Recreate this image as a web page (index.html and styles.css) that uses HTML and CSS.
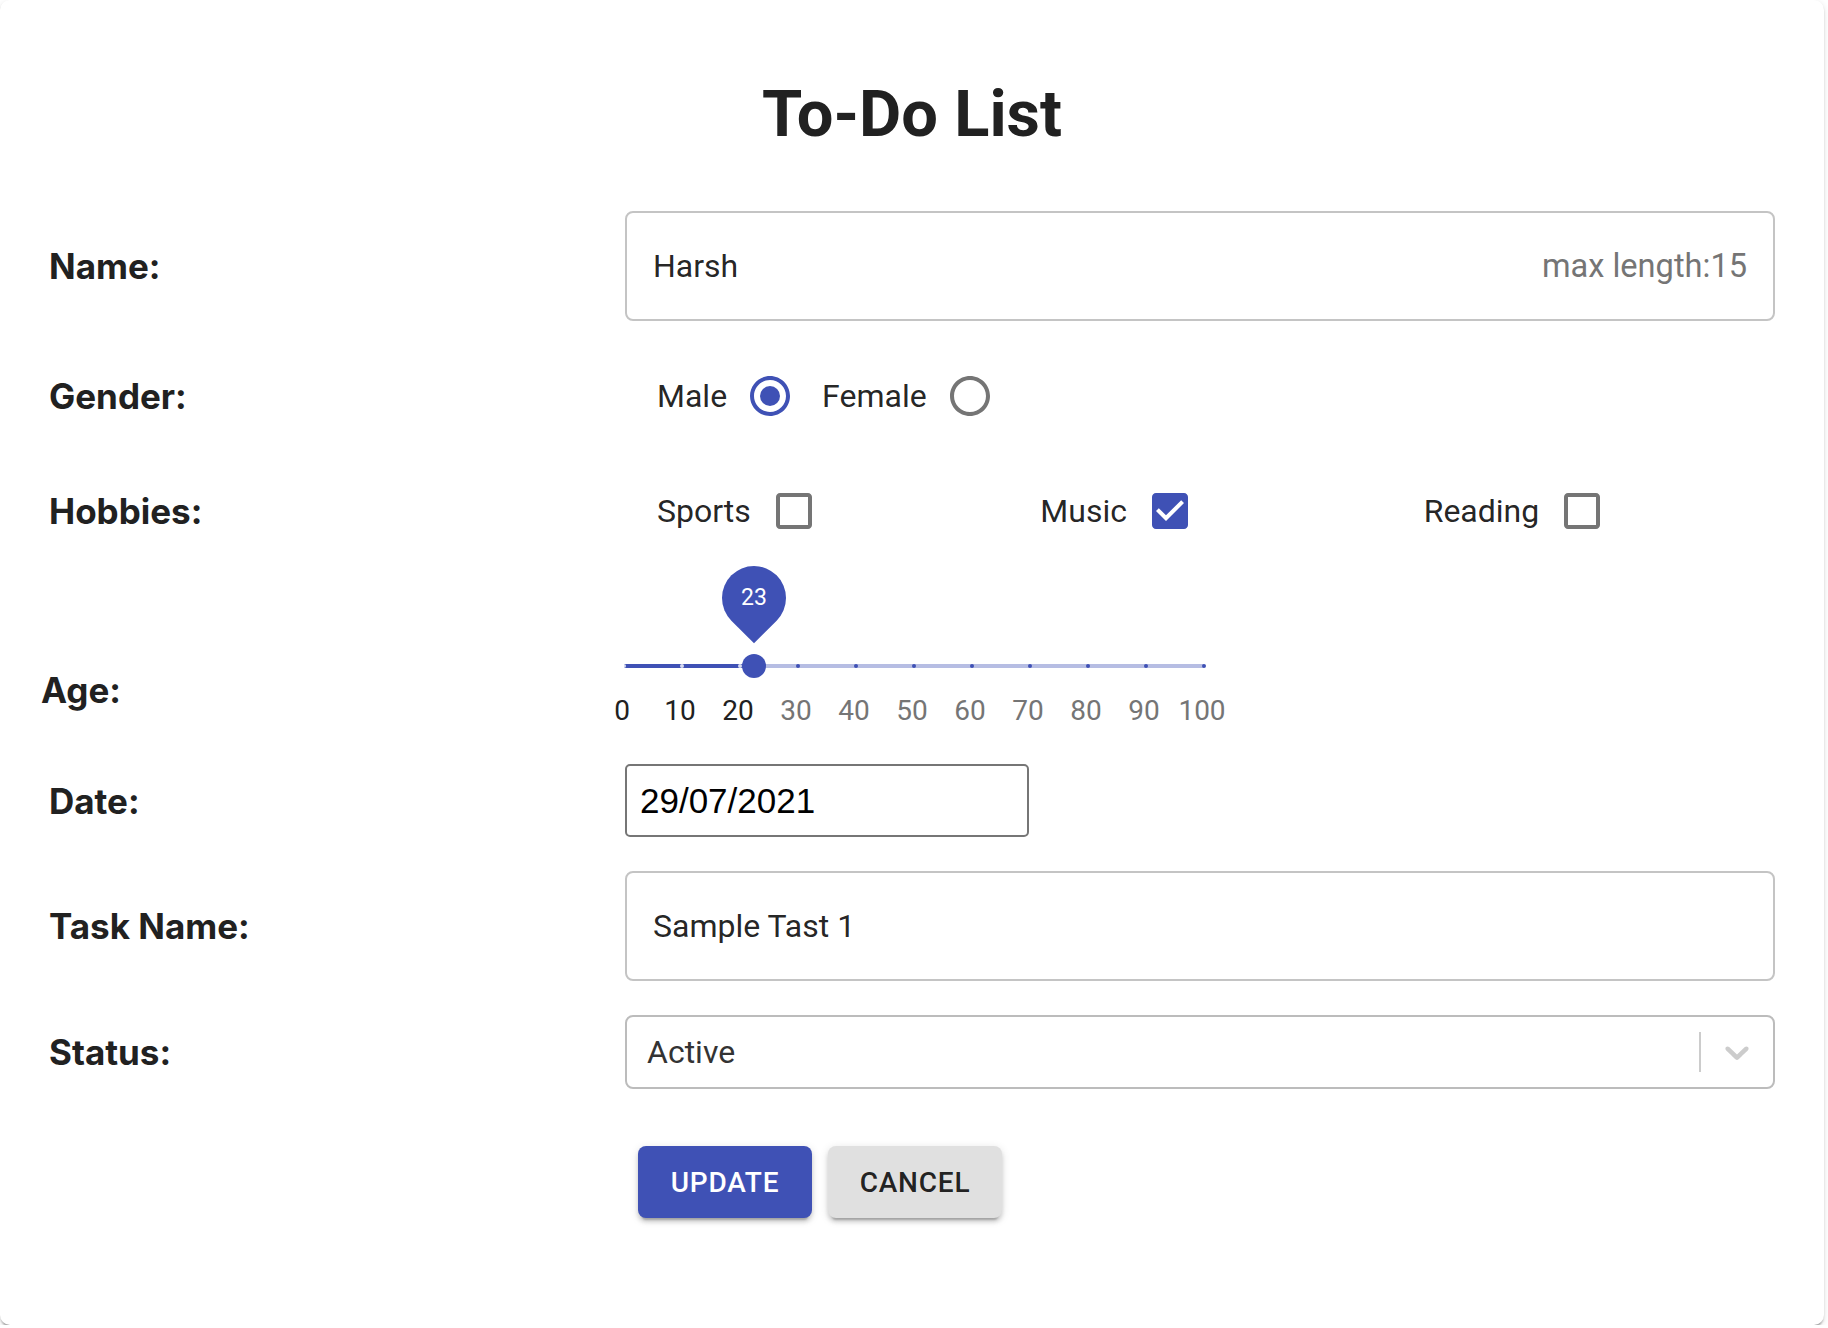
FILE: index.html
```html
<!DOCTYPE html>
<html lang="en">
<head>
<meta charset="utf-8">
<title>To-Do List</title>
<link rel="stylesheet" href="styles.css">
</head>
<body>
<div class="card">
  <h1 class="title">To-Do List</h1>
  <form class="form">
    <div class="row row-name">
      <span class="label">Name:</span>
      <div class="outlined">
        <span class="value">Harsh</span>
        <span class="hint">max length:15</span>
      </div>
    </div>

    <div class="row row-gender">
      <span class="label">Gender:</span>
      <div class="choices">
        <label class="choice">
          <span class="choice-text">Male</span>
          <span class="control control-on">
            <svg viewBox="0 0 24 24" width="48" height="48"><path d="M12 2C6.48 2 2 6.48 2 12s4.48 10 10 10 10-4.48 10-10S17.52 2 12 2zm0 18c-4.42 0-8-3.58-8-8s3.58-8 8-8 8 3.58 8 8-3.58 8-8 8z"/><circle cx="12" cy="12" r="5"/></svg>
          </span>
        </label>
        <label class="choice">
          <span class="choice-text">Female</span>
          <span class="control">
            <svg viewBox="0 0 24 24" width="48" height="48"><path d="M12 2C6.48 2 2 6.48 2 12s4.48 10 10 10 10-4.48 10-10S17.52 2 12 2zm0 18c-4.42 0-8-3.58-8-8s3.58-8 8-8 8 3.58 8 8-3.58 8-8 8z"/></svg>
          </span>
        </label>
      </div>
    </div>

    <div class="row row-hobbies">
      <span class="label">Hobbies:</span>
      <div class="hobbies">
        <label class="choice">
          <span class="choice-text">Sports</span>
          <span class="control">
            <svg viewBox="0 0 24 24" width="48" height="48"><path d="M19 5v14H5V5h14m0-2H5c-1.11 0-2 .9-2 2v14c0 1.1.89 2 2 2h14c1.1 0 2-.9 2-2V5c0-1.1-.9-2-2-2z"/></svg>
          </span>
        </label>
        <label class="choice">
          <span class="choice-text">Music</span>
          <span class="control control-on">
            <svg viewBox="0 0 24 24" width="48" height="48"><path d="M19 3H5c-1.11 0-2 .9-2 2v14c0 1.1.89 2 2 2h14c1.1 0 2-.9 2-2V5c0-1.1-.9-2-2-2zm-9 14l-5-5 1.41-1.41L10 14.17l7.59-7.59L19 8l-9 9z"/></svg>
          </span>
        </label>
        <label class="choice">
          <span class="choice-text">Reading</span>
          <span class="control">
            <svg viewBox="0 0 24 24" width="48" height="48"><path d="M19 5v14H5V5h14m0-2H5c-1.11 0-2 .9-2 2v14c0 1.1.89 2 2 2h14c1.1 0 2-.9 2-2V5c0-1.1-.9-2-2-2z"/></svg>
          </span>
        </label>
      </div>
    </div>

    <div class="row row-age">
      <span class="label label-age">Age:</span>
      <div class="slider">
        <div class="rail"></div>
        <div class="track"></div>
        <span class="mark mark-active" style="left:0px"></span>
        <span class="mark mark-active" style="left:58px"></span>
        <span class="mark mark-active" style="left:116px"></span>
        <span class="mark" style="left:174px"></span>
        <span class="mark" style="left:232px"></span>
        <span class="mark" style="left:290px"></span>
        <span class="mark" style="left:348px"></span>
        <span class="mark" style="left:406px"></span>
        <span class="mark" style="left:464px"></span>
        <span class="mark" style="left:522px"></span>
        <span class="mark" style="left:580px"></span>
        <span class="thumb"></span>
        <span class="value-label"><span class="value-text">23</span></span>
        <span class="mark-label mark-label-active" style="left:0px">0</span>
        <span class="mark-label mark-label-active" style="left:58px">10</span>
        <span class="mark-label mark-label-active" style="left:116px">20</span>
        <span class="mark-label" style="left:174px">30</span>
        <span class="mark-label" style="left:232px">40</span>
        <span class="mark-label" style="left:290px">50</span>
        <span class="mark-label" style="left:348px">60</span>
        <span class="mark-label" style="left:406px">70</span>
        <span class="mark-label" style="left:464px">80</span>
        <span class="mark-label" style="left:522px">90</span>
        <span class="mark-label" style="left:580px">100</span>
      </div>
    </div>

    <div class="row row-date">
      <span class="label">Date:</span>
      <div class="date-input">29/07/2021</div>
    </div>

    <div class="row row-task">
      <span class="label">Task Name:</span>
      <div class="outlined">
        <span class="value">Sample Tast 1</span>
      </div>
    </div>

    <div class="row row-status">
      <span class="label">Status:</span>
      <div class="select">
        <span class="select-value">Active</span>
        <span class="select-sep"></span>
        <span class="select-indicator">
          <svg viewBox="0 0 20 20" width="40" height="40"><path d="M4.516 7.548c0.436-0.446 1.043-0.481 1.576 0l3.908 3.747 3.908-3.747c0.533-0.481 1.141-0.446 1.574 0 0.436 0.445 0.408 1.197 0 1.615-0.406 0.418-4.695 4.502-4.695 4.502-0.217 0.223-0.502 0.335-0.787 0.335s-0.57-0.112-0.789-0.335c0 0-4.287-4.084-4.695-4.502s-0.436-1.170 0-1.615z"/></svg>
        </span>
      </div>
    </div>

    <div class="row row-actions">
      <span class="spacer"></span>
      <div class="actions">
        <button type="button" class="btn btn-primary">Update</button>
        <button type="button" class="btn btn-default">Cancel</button>
      </div>
    </div>
  </form>
</div>
</body>
</html>
```

FILE: styles.css
```css
* { box-sizing: border-box; }

html, body {
  margin: 0;
  padding: 0;
  background: #ffffff;
}

body {
  font-family: Roboto, "Noto Sans", sans-serif;
  color: rgba(0, 0, 0, 0.87);
}

.card {
  width: 1824px;
  height: 1325px;
  background: #ffffff;
  border-radius: 10px;
  box-shadow: 0 4px 2px -2px rgba(0,0,0,0.2), 0 2px 2px 0 rgba(0,0,0,0.14), 0 2px 6px 0 rgba(0,0,0,0.12);
  padding: 82px 49px 0 49px;
}

.title {
  margin: 0 -49px;
  font-family: Roboto, sans-serif;
  font-weight: 700;
  font-size: 65px;
  line-height: 64px;
  height: 64px;
  text-align: center;
  color: #212121;
}

.form {
  margin: 0;
}

.row {
  display: grid;
  grid-template-columns: 576px 1150px;
  align-items: center;
}

.label {
  font-family: Inter, "Noto Sans", sans-serif;
  font-weight: 700;
  font-size: 35px;
  line-height: 40px;
  color: #212121;
}

.row-name { margin-top: 65px; height: 110px; }
.row-gender { margin-top: 33px; height: 84px; }
.row-hobbies { margin-top: 31px; height: 84px; }
.row-age { margin-top: 7px; height: 180px; align-items: start; }
.row-date { margin-top: 24px; height: 73px; }
.row-task { margin-top: 34px; height: 110px; }
.row-status { margin-top: 34px; height: 74px; }
.row-actions { margin-top: 57px; height: 72px; }

.label-age {
  margin-top: 110px;
  margin-left: -8px;
}

/* outlined text field */
.outlined {
  height: 110px;
  border: 2px solid #c4c4c4;
  border-radius: 8px;
  padding: 0 26px;
  display: flex;
  align-items: center;
  justify-content: space-between;
  font-size: 32px;
  line-height: 38px;
}

.value { color: rgba(0, 0, 0, 0.87); }
.hint { color: #757575; font-size: 32.6px; }

/* radio / checkbox */
.choices {
  display: flex;
  align-items: center;
  height: 84px;
}

.choice {
  display: inline-flex;
  align-items: center;
  margin-left: 32px;
  margin-right: -22px;
}

.choice-text {
  font-size: 32px;
  line-height: 38px;
  color: rgba(0, 0, 0, 0.87);
}

.control {
  display: inline-flex;
  padding: 18px 18px 18px 19px;
  color: #757575;
}

.control svg { display: block; fill: currentColor; }

.control-on { color: #3f51b5; }

.hobbies {
  display: grid;
  grid-template-columns: repeat(3, 1fr);
  align-items: center;
  height: 84px;
}

.hobbies .choice { margin-left: 32px; margin-right: 0; }

/* slider */
.slider {
  position: relative;
  height: 180px;
  width: 580px;
  margin-left: -1px;
}

.rail {
  position: absolute;
  left: 0;
  top: 104px;
  width: 580px;
  height: 4px;
  background: #b6bde3;
}

.track {
  position: absolute;
  left: 0;
  top: 104px;
  width: 130px;
  height: 4px;
  background: #3f51b5;
}

.mark {
  position: absolute;
  top: 104px;
  width: 4px;
  height: 4px;
  margin-left: -2px;
  border-radius: 2px;
  background: #3f51b5;
}

.mark-active { background: rgba(255, 255, 255, 0.8); }

.thumb {
  position: absolute;
  left: 118px;
  top: 94px;
  width: 24px;
  height: 24px;
  border-radius: 50%;
  background: #3f51b5;
}

.value-label {
  position: absolute;
  left: 98px;
  top: 6px;
  width: 64px;
  height: 64px;
  border-radius: 50% 50% 50% 0;
  background: #3f51b5;
  transform: rotate(-45deg);
  display: flex;
  align-items: center;
  justify-content: center;
}

.value-text {
  transform: rotate(45deg);
  color: #ffffff;
  font-size: 23px;
  line-height: 24px;
}

.mark-label {
  position: absolute;
  top: 137px;
  transform: translateX(-50%);
  margin-left: -2px;
  font-size: 28px;
  line-height: 28px;
  color: #757575;
  white-space: nowrap;
}

.mark-label-active { color: #212121; }

/* date */
.date-input {
  width: 404px;
  height: 73px;
  border: 2px solid #767676;
  border-radius: 5px;
  padding: 0 13px;
  display: flex;
  align-items: center;
  font-family: "Liberation Sans", Arial, sans-serif;
  font-size: 35px;
  line-height: 40px;
  color: #000000;
}

/* select */
.select {
  height: 74px;
  border: 2px solid #bcbcbc;
  border-radius: 8px;
  display: flex;
  align-items: center;
  padding-left: 20px;
}

.select-value {
  flex: 1;
  font-size: 32px;
  line-height: 38px;
  color: #333333;
}

.select-sep {
  width: 2px;
  height: 40px;
  background: #cccccc;
}

.select-indicator {
  display: inline-flex;
  padding: 0 16px;
  color: #cccccc;
}

.select-indicator svg { display: block; fill: currentColor; }

/* buttons */
.actions {
  display: flex;
  gap: 16px;
  margin-left: 13px;
}

.btn {
  width: 174px;
  height: 72px;
  border: 0;
  border-radius: 8px;
  font-family: Roboto, sans-serif;
  font-weight: 500;
  font-size: 28px;
  letter-spacing: 0.8px;
  text-transform: uppercase;
  box-shadow: 0 6px 2px -4px rgba(0,0,0,0.2), 0 4px 4px 0 rgba(0,0,0,0.14), 0 2px 10px 0 rgba(0,0,0,0.12);
  padding: 0;
}

.btn-primary { background: #3f51b5; color: #ffffff; }
.btn-default { background: #e0e0e0; color: rgba(0, 0, 0, 0.87); }
```
